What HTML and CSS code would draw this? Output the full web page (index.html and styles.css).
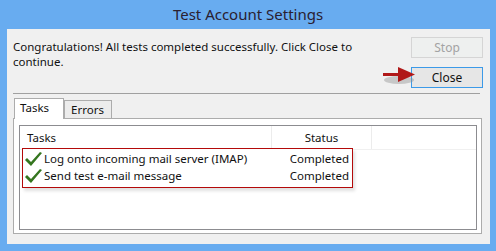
FILE: index.html
```html
<!DOCTYPE html>
<html lang="en">
<head>
  <meta charset="UTF-8">
  <title>Test Account Settings</title>
  <link rel="stylesheet" href="styles.css">
</head>
<body>
  <div class="window">
    <div class="titlebar">Test Account Settings</div>
    <div class="client">
      <div class="top">
        <p class="message">Congratulations! All tests completed successfully. Click Close to continue.</p>
        <div class="buttons">
          <button class="btn" disabled>Stop</button>
          <button class="btn btn-default">Close</button>
          <svg class="arrow" width="42" height="22" viewBox="0 0 42 22">
            <ellipse cx="24" cy="15" rx="15" ry="4" fill="#8a8a8a" opacity="0.4"/>
            <rect x="8" y="8" width="18" height="3" fill="#b01818"/>
            <polygon points="23,2 40,9.5 23,17" fill="#b01818"/>
          </svg>
        </div>
      </div>
      <div class="separator"></div>

      <div class="tabs">
        <div class="tab active">Tasks</div>
        <div class="tab">Errors</div>
      </div>
      <div class="panel">
        <div class="list">
          <div class="list-head">
            <div class="col-task">Tasks</div>
            <div class="col-status">Status</div>
            <div class="col-rest"></div>
          </div>
          <div class="highlight">
            <div class="row">
              <svg class="check" width="17" height="14" viewBox="0 0 17 14"><polygon points="0,8 2,6 6,10 15,0 17,1 6,14" fill="#35761f"/></svg>
              <span class="task">Log onto incoming mail server (IMAP)</span>
              <span class="status">Completed</span>
            </div>
            <div class="row">
              <svg class="check" width="17" height="14" viewBox="0 0 17 14"><polygon points="0,8 2,6 6,10 15,0 17,1 6,14" fill="#35761f"/></svg>
              <span class="task">Send test e-mail message</span>
              <span class="status">Completed</span>
            </div>
          </div>
        </div>
      </div>
    </div>
  </div>
</body>
</html>
```

FILE: styles.css
```css
body { margin: 0; background: #68acf0; font-family: "Noto Sans", Arial, sans-serif; font-size: 11.5px; color: #111; }
.window { width: 496px; height: 251px; }
.titlebar { height: 29px; line-height: 28px; text-align: center; font-size: 15px; color: #2a2030; }
.client { background: #f0f0f0; margin: 0 6px 0 7px; height: 215px; padding: 0 6px 0 6px; box-sizing: border-box; }

.top { display: flex; justify-content: space-between; }
.message { margin: 0; padding-top: 10px; width: 390px; line-height: 15px; }
.buttons { position: relative; display: flex; flex-direction: column; gap: 9px; padding-top: 8px; margin-right: 1px; }
.btn { width: 72px; height: 21px; font-family: inherit; font-size: 12px; border: 1px solid #acacac; background: linear-gradient(#f0f0f0, #e5e5e5); color: #111; padding: 0; }
.btn:disabled { border-color: #d5d5d5; background: #eef0ef; color: #a3a3a3; }
.btn-default { border-color: #3c9ae8; background: #e6e6e6; }
.arrow { position: absolute; left: -36px; top: 36px; z-index: 2; }

.separator { height: 1px; background: #a0a0a0; margin: 5px 4px 0 0; }

.tabs { display: flex; margin-top: 5px; padding-left: 1px; height: 19px; align-items: flex-end; }
.tab { border: 1px solid #acacac; border-bottom: none; padding: 0 7px 0 6px; height: 17px; line-height: 17px; background: #ececec; }
.tab.active { height: 20px; background: #fff; padding: 0 14px 0 5px; margin-bottom: -1px; position: relative; z-index: 1; }
.panel { border: 1px solid #acacac; background: #fff; margin-right: 2px; height: 116px; box-sizing: border-box; padding: 6px 4px 3px 5px; }

.list { border: 1px solid #8c8c90; height: 100%; box-sizing: border-box; }
.list-head { display: flex; height: 23px; line-height: 23px; border-bottom: 1px solid #f0f0f0; }
.col-task { width: 244px; padding-left: 7px; border-right: 1px solid #ececec; }
.col-status { width: 99px; text-align: center; border-right: 1px solid #ececec; }
.col-rest { flex: 1; }

.highlight { width: 331px; margin: -2px 0 0 2px; border: 1px solid #b40a0a; box-sizing: border-box; padding: 1px 3px 3px 2px; background: #fff; box-shadow: 2px 3px 3px rgba(0,0,0,0.12); position: relative; }
.row { display: flex; align-items: center; height: 17px; }
.check { margin-right: 2px; }
.task { flex: 1; }
.status { text-align: right; }
```
